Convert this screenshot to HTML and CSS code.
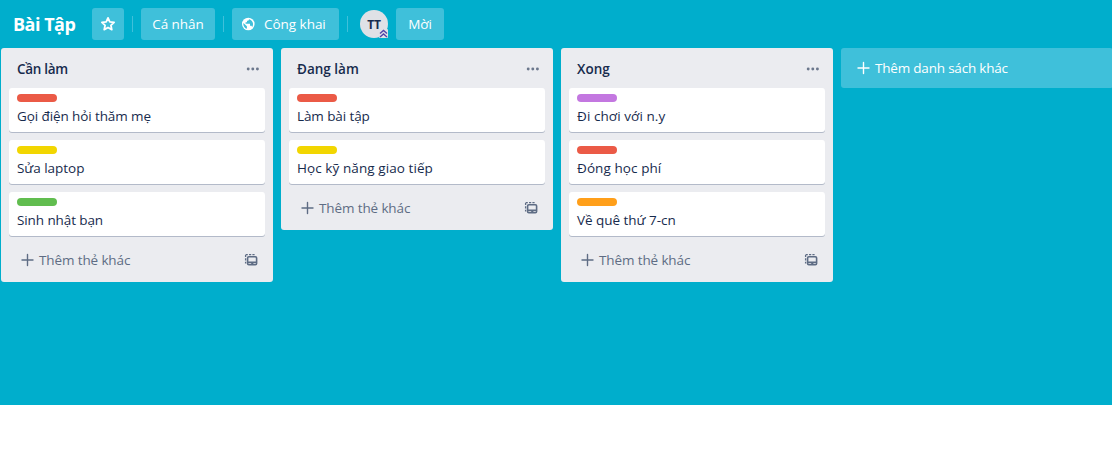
FILE: index.html
```html
<!DOCTYPE html>
<html lang="vi">
<head>
<meta charset="utf-8">
<title>Bài Tập</title>
<link rel="stylesheet" href="styles.css">
</head>
<body>
<svg class="defs" aria-hidden="true">
  <symbol id="more" viewBox="0 0 14 6"><circle cx="2.2" cy="3" r="1.45"/><circle cx="6.8" cy="3" r="1.45"/><circle cx="11.4" cy="3" r="1.45"/></symbol>
  <symbol id="plus" viewBox="0 0 14 14"><path d="M7.500 1.500v11M2 7h11" fill="none" stroke="currentColor" stroke-width="1.400" stroke-linecap="round"/></symbol>
  <symbol id="template" viewBox="0 0 14 14"><path d="M1.600 10.500V8.700M1.600 7.600V5.200M1.600 4V2M1.600 1.600h2.200M5 1.600h2.200M8.400 1.600h2.200" fill="none" stroke="currentColor" stroke-width="1.300"/><rect x="3.600" y="3.700" width="9" height="7.900" rx="1.200" fill="none" stroke="currentColor" stroke-width="1.600"/><path d="M3.500 8.600h9v1.300H9.400v1H7.200v-1H3.500z"/></symbol>
</svg>
<div class="board">
  <header class="header">
    <h1 class="title">Bài Tập</h1>
    <button class="btn star"><svg width="16" height="16" viewBox="0 0 16 16"><path d="M8 1.900l1.800 4 4.300.5-3.200 2.900.9 4.300L8 11.500l-3.800 2.100.9-4.300-3.200-2.900 4.300-.5z" fill="none" stroke="#fff" stroke-width="1.800" stroke-linejoin="round"/></svg></button>
    <span class="divider"></span>
    <button class="btn personal">Cá nhân</button>
    <span class="divider"></span>
    <button class="btn public"><svg width="14" height="14" viewBox="0 0 14 14"><circle cx="7.300" cy="7" r="6.300" fill="#fff"/><path d="M2.400 6l3.500 3.200v2.600C3.900 11.400 1.900 9 2.400 6zM8 2.200c-.2 1.200-.6 1.600-2 1.600v1.500H4.600v1.400H9v2h1.400l.8 1.300c1.900-2.900.6-6.600-3.200-7.800z" fill="#3fc0da"/></svg><span>Công khai</span></button>
    <span class="divider"></span>
    <div class="avatar"><span>TT</span><svg class="badge" width="9" height="9" viewBox="0 0 9 9"><rect width="9" height="9" rx="1" fill="#dfe1e6"/><path d="M1 4.500L4.500 1.500 8 4.500M1 8L4.500 5 8 8" fill="none" stroke="#5243aa" stroke-width="1.400"/></svg></div>
    <button class="btn invite">Mời</button>
  </header>
  <main class="lists">
    <section class="list">
      <div class="list-head"><h2 class="tight">Cần làm</h2><svg class="more"><use href="#more"/></svg></div>
      <article class="card"><i class="label red"></i><p class="tight">Gọi điện hỏi thăm mẹ</p></article>
      <article class="card"><i class="label yellow"></i><p>Sửa laptop</p></article>
      <article class="card"><i class="label green"></i><p class="tight">Sinh nhật bạn</p></article>
      <div class="list-foot"><svg class="plus"><use href="#plus"/></svg><span>Thêm thẻ khác</span><svg class="template"><use href="#template"/></svg></div>
    </section>
    <section class="list">
      <div class="list-head"><h2>Đang làm</h2><svg class="more"><use href="#more"/></svg></div>
      <article class="card"><i class="label red"></i><p class="tight">Làm bài tập</p></article>
      <article class="card"><i class="label yellow"></i><p class="wide">Học kỹ năng giao tiếp</p></article>
      <div class="list-foot"><svg class="plus"><use href="#plus"/></svg><span>Thêm thẻ khác</span><svg class="template"><use href="#template"/></svg></div>
    </section>
    <section class="list">
      <div class="list-head"><h2>Xong</h2><svg class="more"><use href="#more"/></svg></div>
      <article class="card"><i class="label purple"></i><p class="wide">Đi chơi với n.y</p></article>
      <article class="card"><i class="label red"></i><p class="wide">Đóng học phí</p></article>
      <article class="card"><i class="label orange"></i><p>Về quê thứ 7-cn</p></article>
      <div class="list-foot"><svg class="plus"><use href="#plus"/></svg><span>Thêm thẻ khác</span><svg class="template"><use href="#template"/></svg></div>
    </section>
    <button class="add-list"><svg class="plus"><use href="#plus"/></svg><span>Thêm danh sách khác</span></button>
  </main>
</div>
</body>
</html>
```
FILE: styles.css
```css
* { box-sizing: border-box; }
body { margin: 0; background: #fff; font: 13.5px/20px "Open Sans", "Noto Sans", sans-serif; letter-spacing: -0.03px; color: #172b4d; overflow: hidden; }
h1, h2, p { margin: 0; }
button { border: 0; padding: 0; font: inherit; font-weight: 500; letter-spacing: inherit; color: #fff; }
svg { display: block; flex: none; fill: currentColor; }
.defs { display: none; }
.board { height: 405px; background: #00aecc; overflow: hidden; }
.header { height: 48px; display: flex; align-items: center; padding-left: 13px; color: #fff; }
.title { width: 79px; font-size: 18px; font-weight: 700; line-height: 32px; letter-spacing: -0.5px; white-space: nowrap; }
.btn { height: 32px; border-radius: 3px; background: #3fc0da; display: flex; align-items: center; justify-content: center; white-space: nowrap; }
.star { width: 32px; }
.personal { width: 74px; }
.public { width: 107px; justify-content: flex-start; padding-left: 9px; gap: 9px; }
.invite { width: 48px; }
.divider { width: 1px; height: 16px; margin: 0 8px; background: #3fc0da; }
.avatar { position: relative; width: 28px; height: 28px; margin: 0 8px 0 4px; border-radius: 50%; background: #dfe1e6; color: #172b4d; font-size: 12px; font-weight: 700; line-height: 29px; text-align: center; letter-spacing: -0.2px; }
.badge { position: absolute; right: 0; bottom: 0; }
.lists { display: flex; align-items: flex-start; gap: 8px; padding-left: 1px; }
.list { flex: none; width: 272px; padding: 0 8px; border-radius: 3px; background: #ebecf0; }
.list-head { height: 40px; display: flex; align-items: center; justify-content: space-between; padding: 1px 5px 0 8px; }
h2 { font-size: 13.5px; font-weight: 600; line-height: 20px; letter-spacing: 0; }
h2.tight { letter-spacing: -0.3px; }
.more { width: 14px; height: 6px; color: #6b778c; }
.card { height: 44px; margin-bottom: 8px; padding: 6px 8px 0; border-radius: 3px; background: #fff; box-shadow: 0 1px 0 #b3bac9; }
.label { display: block; width: 40px; height: 8px; border-radius: 4px; }
.card p { margin-top: 4px; white-space: nowrap; }
p.tight { letter-spacing: -0.1px; }
p.wide { letter-spacing: 0.08px; }
.red { background: #eb5a46; }
.yellow { background: #f2d600; }
.green { background: #61bd4f; }
.purple { background: #c377e0; }
.orange { background: #ff9f1a; }
.list-foot { height: 38px; display: flex; align-items: flex-start; padding: 6px 8px 0 11px; color: #5e6c84; letter-spacing: -0.12px; }
.plus { width: 14px; height: 14px; margin: 3px 5px 0 0; }
.template { width: 14px; height: 14px; margin: 3px 0 0 auto; }
.list-foot .template { margin-right: -1px; }
.add-list { flex: none; width: 272px; height: 40px; border-radius: 3px; background: #3fc0da; display: flex; align-items: center; padding-left: 15px; letter-spacing: -0.2px; }
.add-list .plus { margin-top: 0; }
```
